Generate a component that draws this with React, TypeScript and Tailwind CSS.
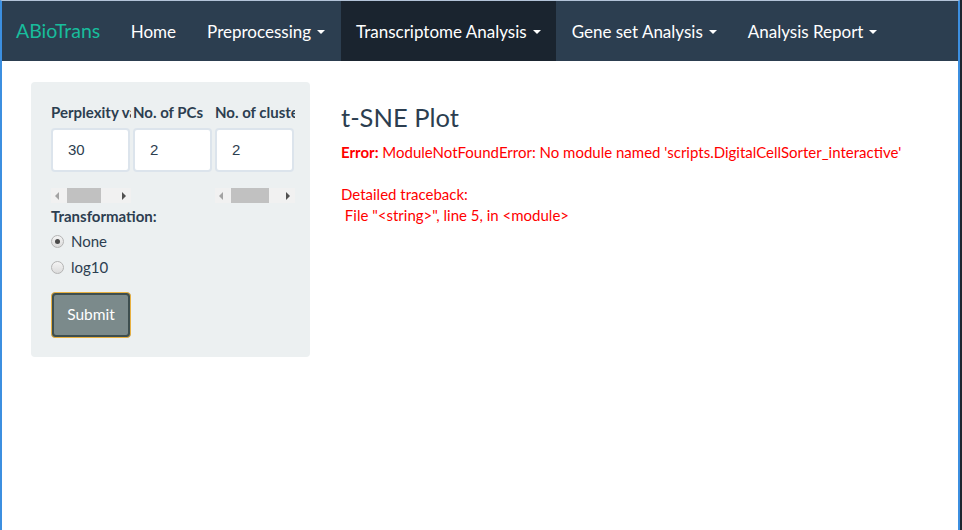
import React from "react";

const navItems = [
  { label: "Home", caret: false, active: false },
  { label: "Preprocessing", caret: true, active: false },
  { label: "Transcriptome Analysis", caret: true, active: true },
  { label: "Gene set Analysis", caret: true, active: false },
  { label: "Analysis Report", caret: true, active: false },
];

const Caret = () => (
  <span className="ml-[6px] inline-block h-0 w-0 border-x-[4px] border-t-[4px] border-x-transparent border-t-white align-middle" />
);

// fake horizontal scrollbar under the clipped numeric inputs
const FakeScrollbar: React.FC<{ thumb: number }> = ({ thumb }) => (
  <div className="flex h-[15px] w-[80px] items-center bg-[#f1f1f1]">
    <span className="ml-[4px] h-0 w-0 border-y-[4px] border-r-[4px] border-y-transparent border-r-[#a3a3a3]" />
    <span className="ml-[8px] h-[15px] bg-[#c1c1c1]" style={{ width: thumb }} />
    <span className="ml-auto mr-[5px] h-0 w-0 border-y-[4px] border-l-[4px] border-y-transparent border-l-[#505050]" />
  </div>
);

const NumberField: React.FC<{ label: string; value: string; scroll?: number }> = ({
  label,
  value,
  scroll,
}) => (
  <div className="flex w-[80px] flex-col">
    <div className="h-[24px] overflow-hidden whitespace-nowrap text-[15px] font-bold leading-[24px] text-[#2c3e50]">
      {label}
    </div>
    <div className="mt-[4px] flex h-[44px] w-[79px] items-center rounded-[4px] border-2 border-[#dce4ec] bg-white pl-[15px] font-['Liberation_Sans',Arial,sans-serif] text-[15px] text-[#2c3e50]">
      {value}
    </div>
    <div className="mt-[16px] h-[15px]">{scroll ? <FakeScrollbar thumb={scroll} /> : null}</div>
  </div>
);

const Radio: React.FC<{ label: string; checked: boolean }> = ({ label, checked }) => (
  <label className="flex h-[26px] items-center gap-[7px] text-[15px] text-[#2c3e50]">
    <span className="flex h-[13px] w-[13px] items-center justify-center rounded-full border border-[#b4b4b4] bg-gradient-to-b from-[#f4f4f4] to-[#dcdcdc]">
      {checked && <span className="h-[5px] w-[5px] rounded-full bg-[#4a4a4a]" />}
    </span>
    {label}
  </label>
);

export default function App() {
  return (
    <div className="h-[530px] w-[962px] bg-[#1e2630] font-['Lato','Noto_Sans',sans-serif]">
      <div className="flex h-full w-[960px] flex-col border-x-2 border-t border-x-[#3c8fe0] border-t-[#b3c3d8] bg-white">
        {/* navbar */}
        <nav className="flex h-[60px] items-stretch bg-[#2c3e50] pl-[14px] text-[17px]">
          <div className="flex items-center pr-[15px] text-[19.5px] text-[#18bc9c]">ABioTrans</div>
          {navItems.map((item) => (
            <div
              key={item.label}
              className={
                item.active
                  ? "flex items-center bg-[#1a242f] px-[15.5px] pt-[2px] text-white"
                  : "flex items-center px-[15.5px] pt-[2px] text-white"
              }
            >
              {item.label}
              {item.caret && <Caret />}
            </div>
          ))}
        </nav>

        <div className="flex pt-[21px] pl-[29px]">
          {/* sidebar */}
          <div className="h-[275px] w-[279px] rounded-[4px] bg-[#ecf0f1] px-[20px] pt-[18px]">
            <div className="grid grid-cols-[80px_80px_80px] gap-x-[2px]">
              <NumberField label="Perplexity value" value="30" scroll={34} />
              <NumberField label="No. of PCs" value="2" />
              <NumberField label="No. of clusters" value="2" scroll={38} />
            </div>
            <div className="mt-[2px] text-[15px] font-bold leading-[22px] text-[#2c3e50]">Transformation:</div>
            <div className="mt-[1px] flex flex-col">
              <Radio label="None" checked />
              <Radio label="log10" checked={false} />
            </div>
            <button className="mt-[12px] h-[46px] w-[80px] rounded-[4px] border border-[#e8b040] bg-[#3d4e4f] p-[2px]">
              <span className="flex h-full w-full items-center justify-center rounded-[2px] bg-[#7b8a8b] text-[15.5px] text-white">
                Submit
              </span>
            </button>
          </div>

          {/* main */}
          <div className="ml-[31px] pt-[18px] text-[15px]">
            <h3 className="text-[25.5px] leading-[34px] text-[#2c3e50]">t-SNE Plot</h3>
            <div className="mt-[7px] leading-[22px] text-[#ff0000]">
              <span className="font-bold">Error:</span> ModuleNotFoundError: No module named
              'scripts.DigitalCellSorter_interactive'
            </div>
            <div className="mt-[21px] leading-[21px] text-[#ff0000]">Detailed traceback:</div>
            <div className="whitespace-pre leading-[21px] text-[#ff0000]">
              {' File "<string>", line 5, in <module>'}
            </div>
          </div>
        </div>
      </div>
    </div>
  );
}
